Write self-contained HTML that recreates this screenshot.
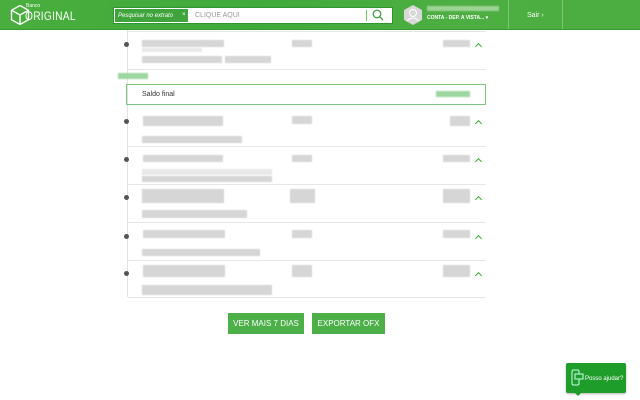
<!DOCTYPE html>
<html><head><style>
*{margin:0;padding:0;box-sizing:border-box}
body{width:640px;height:400px;background:#fff;font-family:"Liberation Sans",sans-serif;position:relative;overflow:hidden}
.hdr{position:absolute;left:0;top:0;width:640px;height:30px;background:linear-gradient(100deg,#4aae3e 0%,#3faa3a 40%,#4dae41 70%,#4cad40 100%)}
.hdr::after{content:"";position:absolute;left:0;bottom:0;width:640px;height:1px;background:#3a9a32}
.a{position:absolute;white-space:nowrap;line-height:1}
.g{position:absolute;background:#d6d6d6;filter:blur(.5px)}
.gl{position:absolute;background:#e8e8e8;filter:blur(.5px)}
.dot{position:absolute;left:124px;width:5px;height:5px;border-radius:50%;background:#555}
.sep{position:absolute;left:128px;width:358px;height:1px;background:#e6e6e6}
.chev{position:absolute;left:476px;width:5px;height:5px;border-left:1px solid #3bae3b;border-top:1px solid #3bae3b;transform:rotate(45deg)}
.btn{position:absolute;top:313px;height:21px;background:#4caf48;color:#fff;font-size:8px;text-align:center;line-height:21px}
</style></head><body>
<div class="hdr">
 <svg class="a" style="left:9px;top:4px" width="22" height="22" viewBox="0 0 22 22"><path d="M11 1.5L19.5 6.3V15.7L11 20.5L2.5 15.7V6.3Z M2.5 6.3L11 11L19.5 6.3 M11 11V20.5" fill="none" stroke="#fff" stroke-width="1.4"/></svg>
 <div class="a" style="left:26px;top:4px;font-size:5px;color:#fff">Banco</div>
 <div class="a" style="left:25px;top:10px;font-size:12px;color:#fff;letter-spacing:.3px;transform:scaleX(.85);transform-origin:left">ORIGINAL</div>
 <div class="a" style="left:113px;top:7px;width:280px;height:17px;background:#fff;border:1px solid #2e9530"></div>
 <div class="a" style="left:115px;top:9px;width:73px;height:13px;background:#3fa43b"></div>
 <div class="a" style="left:118px;top:13px;color:#fff;font-size:6px;font-style:italic">Pesquisar no extrato</div>
 <div class="a" style="left:182px;top:12px;color:#fff;font-size:6px">×</div>
 <div class="a" style="left:195px;top:12px;color:#999;font-size:7px">CLIQUE AQUI</div>
 <div class="a" style="left:366px;top:10px;width:1px;height:11px;background:#6c6"></div>
 <svg class="a" style="left:372px;top:9px" width="12" height="12"><circle cx="5" cy="5" r="3.8" fill="none" stroke="#3a9a3a" stroke-width="1.2"/><path d="M8 8L11 11" stroke="#3a9a3a" stroke-width="1.3"/></svg>
 <svg class="a" style="left:403px;top:4px" width="20" height="22"><path d="M10 1L19 6V16L10 21L1 16V6Z" fill="#d8d8d8"/><circle cx="10" cy="9" r="3.5" fill="none" stroke="#fff" stroke-width="1"/><path d="M4 17Q10 11 16 17" fill="none" stroke="#fff"/></svg>
 <div class="a" style="left:427px;top:6px;width:72px;height:5px;background:#9dd394;filter:blur(.8px)"></div>
 <div class="a" style="left:427px;top:16px;color:#fff;font-size:5px;font-weight:bold">CONTA - DEP. A VISTA... ▾</div>
 <div class="a" style="left:508px;top:0;width:1px;height:30px;background:#7cc772"></div>
 <div class="a" style="left:562px;top:0;width:1px;height:30px;background:#7cc772"></div>
 <div class="a" style="left:527px;top:12px;color:#fff;font-size:7px">Sair ›</div>
</div>

<div class="a" style="left:127px;top:30px;width:1px;height:267px;background:#e2e2e2"></div>
<div class="sep" style="top:31px"></div>
<div class="sep" style="top:69px"></div>
<div class="sep" style="top:146px"></div>
<div class="sep" style="top:184px"></div>
<div class="sep" style="top:222px"></div>
<div class="sep" style="top:260px"></div>
<div class="sep" style="top:297px"></div>

<div class="dot" style="top:42px"></div><div class="chev" style="top:44px"></div>
<div class="g" style="left:142px;top:40px;width:82px;height:7px"></div>
<div class="gl" style="left:142px;top:48px;width:60px;height:4px"></div>
<div class="g" style="left:292px;top:40px;width:20px;height:7px"></div>
<div class="g" style="left:443px;top:40px;width:27px;height:7px"></div>
<div class="g" style="left:142px;top:56px;width:80px;height:7px"></div>
<div class="g" style="left:225px;top:56px;width:46px;height:7px"></div>

<div class="a" style="left:118px;top:73px;width:30px;height:6px;background:#9cd6a0;filter:blur(.7px)"></div>
<div class="a" style="left:126px;top:84px;width:360px;height:21px;border:1px solid #7cc47f"></div>
<div class="a" style="left:142px;top:91px;font-size:7px;color:#333">Saldo final</div>
<div class="a" style="left:436px;top:91px;width:34px;height:6px;background:#9cd6a0;filter:blur(.7px)"></div>

<div class="dot" style="top:119px"></div><div class="chev" style="top:121px"></div>
<div class="g" style="left:143px;top:116px;width:80px;height:10px"></div>
<div class="g" style="left:292px;top:116px;width:20px;height:8px"></div>
<div class="g" style="left:450px;top:116px;width:20px;height:10px"></div>
<div class="g" style="left:142px;top:136px;width:100px;height:7px"></div>

<div class="dot" style="top:157px"></div><div class="chev" style="top:159px"></div>
<div class="g" style="left:143px;top:155px;width:80px;height:7px"></div>
<div class="g" style="left:292px;top:155px;width:20px;height:7px"></div>
<div class="g" style="left:443px;top:155px;width:27px;height:7px"></div>
<div class="gl" style="left:142px;top:169px;width:130px;height:6px"></div>
<div class="g" style="left:142px;top:176px;width:130px;height:6px"></div>

<div class="dot" style="top:195px"></div><div class="chev" style="top:197px"></div>
<div class="g" style="left:142px;top:189px;width:82px;height:14px"></div>
<div class="g" style="left:290px;top:189px;width:25px;height:14px"></div>
<div class="g" style="left:443px;top:189px;width:27px;height:14px"></div>
<div class="g" style="left:142px;top:210px;width:105px;height:8px"></div>

<div class="dot" style="top:234px"></div><div class="chev" style="top:236px"></div>
<div class="g" style="left:143px;top:230px;width:82px;height:8px"></div>
<div class="g" style="left:292px;top:230px;width:20px;height:8px"></div>
<div class="g" style="left:443px;top:230px;width:27px;height:8px"></div>
<div class="g" style="left:142px;top:249px;width:118px;height:7px"></div>

<div class="dot" style="top:271px"></div><div class="chev" style="top:273px"></div>
<div class="g" style="left:143px;top:265px;width:82px;height:12px"></div>
<div class="g" style="left:292px;top:265px;width:20px;height:12px"></div>
<div class="g" style="left:443px;top:265px;width:27px;height:12px"></div>
<div class="g" style="left:142px;top:285px;width:130px;height:10px"></div>

<div class="btn" style="left:228px;width:76px">VER MAIS 7 DIAS</div>
<div class="btn" style="left:312px;width:73px">EXPORTAR OFX</div>

<div class="a" style="left:566px;top:363px;width:60px;height:30px;background:#1f9d2a;border-radius:2px;box-shadow:0 1px 2px rgba(0,0,0,.3)"></div>
<div class="a" style="left:574px;top:392px;width:0;height:0;border-left:4px solid transparent;border-right:4px solid transparent;border-top:4px solid #1f9d2a"></div>
<svg class="a" style="left:570px;top:369px" width="14" height="18"><rect x="2" y="1" width="7" height="15" rx="1.5" fill="none" stroke="#cfe" stroke-width="1"/><rect x="5" y="5" width="8" height="5" fill="#1f9d2a" stroke="#cfe" stroke-width="1"/></svg>
<div class="a" style="left:585px;top:376px;font-size:6px;color:#fff">Posso ajudar?</div>
</body></html>
